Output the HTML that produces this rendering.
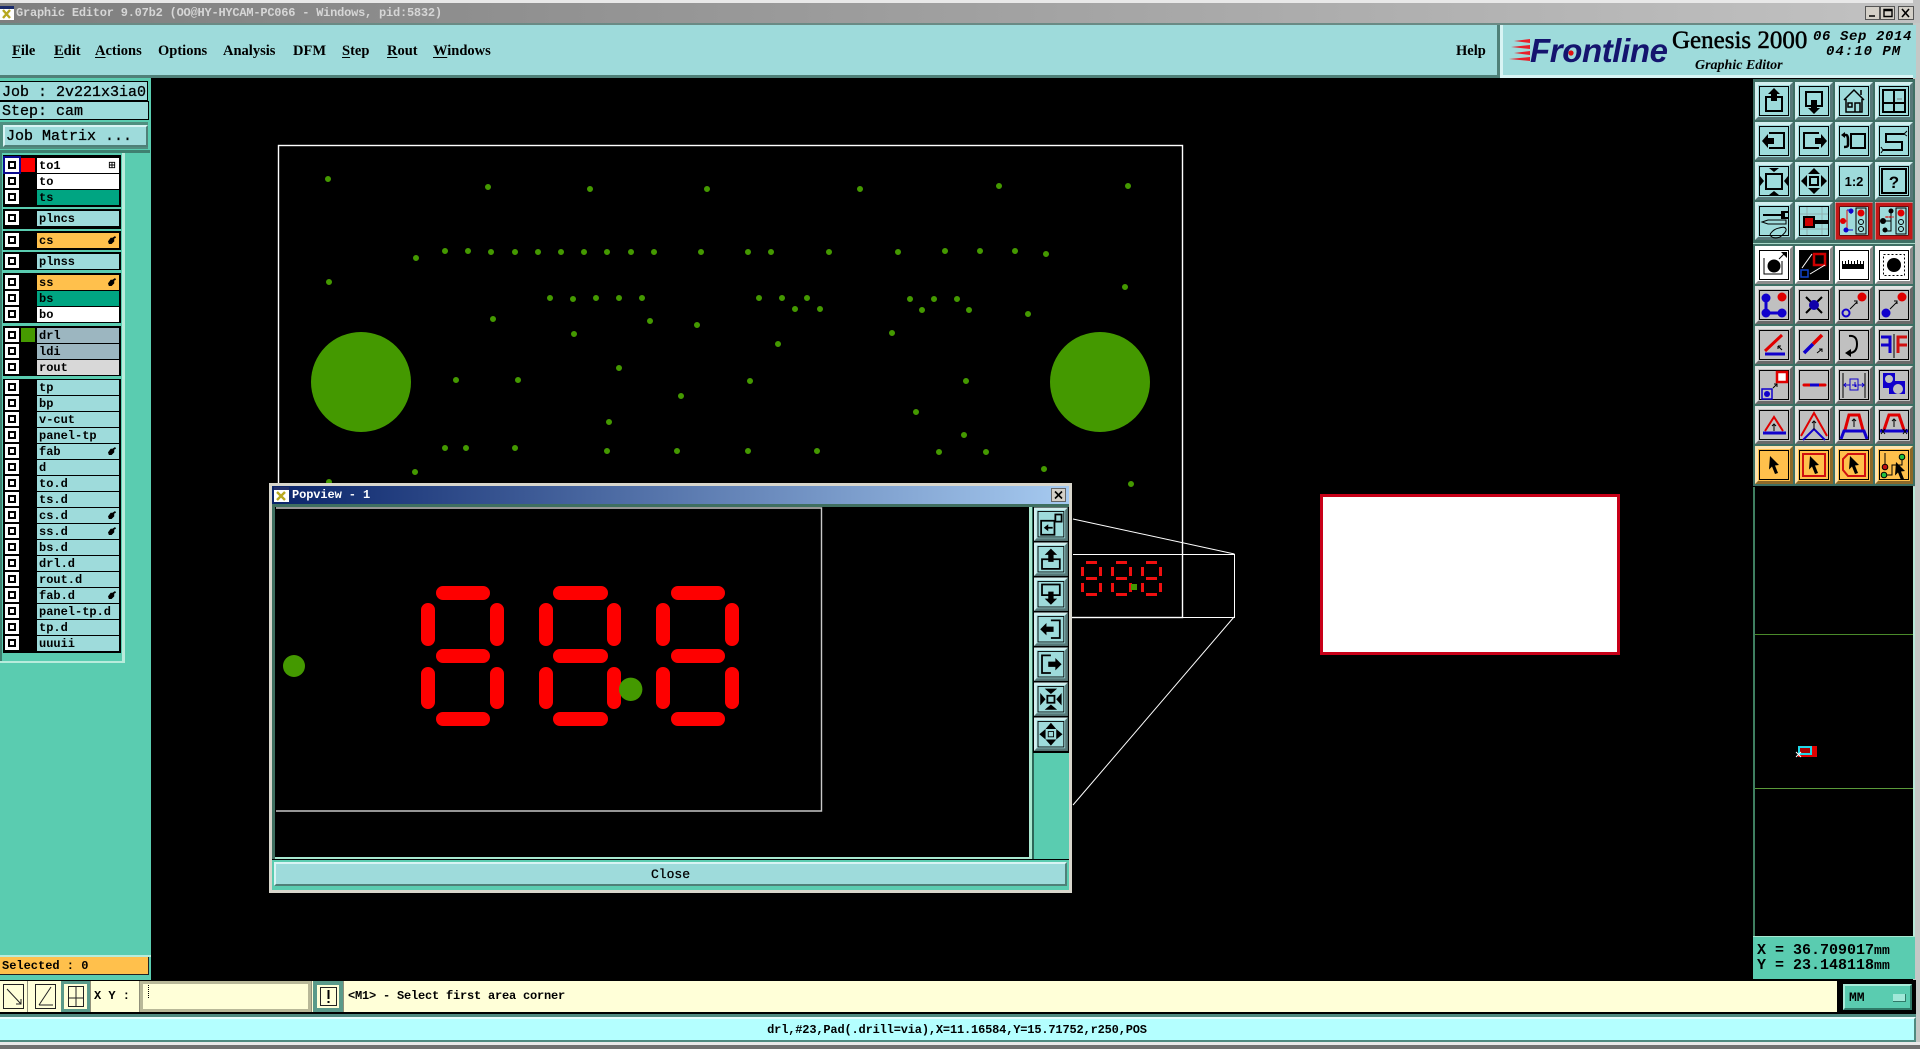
<!DOCTYPE html>
<html><head><meta charset="utf-8"><title>Graphic Editor</title>
<style>
html,body{margin:0;padding:0;background:#000;width:1920px;height:1049px;overflow:hidden}
body{position:relative;font-family:"Liberation Mono",monospace;font-weight:bold;font-size:12px;color:#000}
.a,.t,.r{position:absolute}
.t{white-space:pre;line-height:1}
.m{font-family:"Liberation Serif",serif;font-size:14.5px;top:44px;text-decoration:none}
.m u{text-underline-offset:2px}
.g{position:absolute;left:3px;width:118px;background:#000}
.r{left:5px;width:114px;height:15px}
.c{position:absolute;left:0;top:0;width:14px;height:14px;background:#fff}
.c:after{content:"";position:absolute;left:3px;top:3px;width:4px;height:4px;border:2px solid #000;background:#fff}
.l{position:absolute;left:32px;top:0;width:82px;height:15px;line-height:17px;padding-left:2px;box-sizing:border-box;background:#9edbdb;color:#000;white-space:pre}
.w{background:#fff}.e{background:#00a582}.o{background:#ffc04c}.s{background:#9cb6c0}.y{background:#d8d8d8}
.h{position:absolute;right:3px;top:3px;width:8px;height:8px}
svg{position:absolute;left:0;top:0;overflow:visible}
use.q{fill:#9edbdb}use.wh{fill:#fff}use.n{fill:#c0c0c0}use.or{fill:#ffc04c}
</style></head><body>

<!-- title -->
<div class="a" style="left:0;top:0;width:1920px;height:3px;background:#e8e8e8"></div>
<div class="a" style="left:0;top:3px;width:1920px;height:20px;background:linear-gradient(90deg,#7e7e7e,#c2c2c2)"></div>
<div class="a" style="left:0;top:23px;width:1920px;height:2px;background:#6a8a84"></div>
<div class="t" style="left:16px;top:7px;color:#d6d6d6;font-size:12px;letter-spacing:-.22px">Graphic Editor 9.07b2 (OO@HY-HYCAM-PC066 - Windows, pid:5832)</div>
<svg width="1920" height="30" style="z-index:5">
<rect x="0" y="6" width="14" height="14" fill="#fff"/><rect x="0" y="6" width="14" height="3" fill="#1a2a6a"/>
<path d="M3 10l7 8M10 10l-7 8" stroke="#b8a820" stroke-width="2.4"/>
<g fill="#d4d0c8" stroke="#555"><rect x="1865.5" y="6.5" width="14" height="13"/><rect x="1880.5" y="6.5" width="14" height="13"/><rect x="1898.5" y="6.5" width="15" height="13"/></g>
<path d="M1869 16h6M1884 9.5h8v7h-8zM1884 10.5h8" stroke="#000" stroke-width="1.4" fill="none"/>
<path d="M1902 9l7 8M1909 9l-7 8" stroke="#000" stroke-width="1.6"/>
</svg>

<!-- menu -->
<div class="a" style="left:0;top:25px;width:1500px;height:50px;background:#9edbdb;border-bottom:3px solid #4f8078"></div>
<div class="a" style="left:1497px;top:25px;width:3px;height:53px;background:#4f8078"></div>
<div class="a" style="left:1500px;top:25px;width:3px;height:53px;background:#d8f4f4"></div>
<div class="a" style="left:1503px;top:25px;width:412px;height:50px;background:#9edbdb;border-bottom:3px solid #d8f4f4"></div>
<div class="a" style="left:1913px;top:0;width:7px;height:1049px;background:#c4c8c6"></div>
<div class="a" style="left:1913px;top:0;width:7px;height:23px;background:#c2c2c2"></div>
<div class="a" style="left:1913px;top:25px;width:3px;height:53px;background:#9edbdb"></div>
<div class="t m" style="left:12px"><u>F</u>ile</div>
<div class="t m" style="left:54px"><u>E</u>dit</div>
<div class="t m" style="left:95px"><u>A</u>ctions</div>
<div class="t m" style="left:158px">Options</div>
<div class="t m" style="left:223px">Analysis</div>
<div class="t m" style="left:293px">DFM</div>
<div class="t m" style="left:342px"><u>S</u>tep</div>
<div class="t m" style="left:387px"><u>R</u>out</div>
<div class="t m" style="left:433px"><u>W</u>indows</div>
<div class="t m" style="left:1456px">Help</div>
<div class="t" style="left:1530px;top:32px;font:italic bold 33px 'Liberation Sans',sans-serif;color:#14146e;letter-spacing:-.4px">Frontline</div>
<svg width="1920" height="80" style="z-index:3">
<path fill="#e8202a" d="M1514 41l16-2v4zM1511 47l19-2v4zM1514 53l16-2v4zM1509 59l21-2v4z"/>
<circle cx="1571" cy="53" r="2.6" fill="#e01010"/>
</svg>
<div class="t" style="left:1672px;top:27px;font:normal 25px 'Liberation Serif',serif;-webkit-text-stroke:.5px #000">Genesis 2000</div>
<div class="t" style="left:1695px;top:58px;font:italic bold 14px 'Liberation Serif',serif">Graphic Editor</div>
<div class="t" style="left:1813px;top:29px;font:italic bold 14px 'Liberation Mono',monospace;letter-spacing:.6px">06 Sep 2014</div>
<div class="t" style="left:1826px;top:44px;font:italic bold 14px 'Liberation Mono',monospace;letter-spacing:1px">04:10 PM</div>

<!-- left panel -->
<div class="a" style="left:0;top:78px;width:151px;height:902px;background:#5accb0"></div>
<div class="a" style="left:0;top:81px;width:147px;height:18px;background:#9edbdb;border:1px solid #000;border-left:0"></div>
<div class="a" style="left:0;top:101px;width:148px;height:17px;background:#9edbdb;border:1px solid #000;border-left:0"></div>
<div class="a" style="left:0;top:122px;width:148px;height:27px;background:#4f8f80"></div>
<div class="a" style="left:3px;top:125px;width:141px;height:18px;background:#9edbdb;border-top:2px solid #d8f4f4;border-left:2px solid #d8f4f4;border-bottom:2px solid #4f8078;border-right:2px solid #4f8078"></div>
<div class="t" style="left:2px;top:85px;font-size:15px;font-weight:normal;-webkit-text-stroke:.3px #000">Job : 2v221x3ia0</div>
<div class="t" style="left:2px;top:104px;font-size:15px;font-weight:normal;-webkit-text-stroke:.3px #000">Step: cam</div>
<div class="t" style="left:6px;top:129px;font-size:15px;font-weight:normal;-webkit-text-stroke:.3px #000">Job Matrix ...</div>
<div class="a" style="left:0;top:150px;width:150px;height:3px;background:#3f8070"></div>
<div class="a" style="left:122px;top:153px;width:3px;height:510px;background:#b8ecdc"></div>
<div class="a" style="left:0;top:661px;width:125px;height:2px;background:#b8ecdc"></div>
<div class="a" style="left:0;top:153px;width:2px;height:508px;background:#3f8070"></div>

<div class="g" style="top:155px;height:52px"></div>
<div class="g" style="top:209px;height:20px"></div>
<div class="g" style="top:231px;height:19px"></div>
<div class="g" style="top:252px;height:18px"></div>
<div class="g" style="top:273px;height:50px"></div>
<div class="g" style="top:326px;height:50px"></div>
<div class="g" style="top:379px;height:274px"></div>

<div class="a" style="left:5px;top:158px;width:14px;height:14px;outline:2px solid #0a0a90"></div>
<div class="a" style="left:21px;top:158px;width:14px;height:14px;background:#fe0000"></div>
<div class="a" style="left:21px;top:328px;width:14px;height:14px;background:#469a00"></div>

<div class="r" style="top:158px"><i class="c"></i><span class="l w">to1<svg class="h" viewBox="0 0 9 9" style="left:auto"><path d="M1.5 1.5h6v6h-6zM4.5 1.5v6M1.5 4.5h6" fill="none" stroke="#000"/></svg></span></div>
<div class="r" style="top:174px"><i class="c"></i><span class="l w">to</span></div>
<div class="r" style="top:190px"><i class="c"></i><span class="l e">ts</span></div>
<div class="r" style="top:211px"><i class="c"></i><span class="l">plncs</span></div>
<div class="r" style="top:233px"><i class="c"></i><span class="l o">cs<svg class="h" viewBox="0 0 9 9" style="left:auto"><path d="M0 6l3-4h2l3-2 1 2-2 1v3L4 9H1z"/></svg></span></div>
<div class="r" style="top:254px"><i class="c"></i><span class="l">plnss</span></div>
<div class="r" style="top:275px"><i class="c"></i><span class="l o">ss<svg class="h" viewBox="0 0 9 9" style="left:auto"><path d="M0 6l3-4h2l3-2 1 2-2 1v3L4 9H1z"/></svg></span></div>
<div class="r" style="top:291px"><i class="c"></i><span class="l e">bs</span></div>
<div class="r" style="top:307px"><i class="c"></i><span class="l w">bo</span></div>
<div class="r" style="top:328px"><i class="c"></i><span class="l s">drl</span></div>
<div class="r" style="top:344px"><i class="c"></i><span class="l s">ldi</span></div>
<div class="r" style="top:360px"><i class="c"></i><span class="l y">rout</span></div>
<div class="r" style="top:380px"><i class="c"></i><span class="l">tp</span></div>
<div class="r" style="top:396px"><i class="c"></i><span class="l">bp</span></div>
<div class="r" style="top:412px"><i class="c"></i><span class="l">v-cut</span></div>
<div class="r" style="top:428px"><i class="c"></i><span class="l">panel-tp</span></div>
<div class="r" style="top:444px"><i class="c"></i><span class="l">fab<svg class="h" viewBox="0 0 9 9" style="left:auto"><path d="M0 6l3-4h2l3-2 1 2-2 1v3L4 9H1z"/></svg></span></div>
<div class="r" style="top:460px"><i class="c"></i><span class="l">d</span></div>
<div class="r" style="top:476px"><i class="c"></i><span class="l">to.d</span></div>
<div class="r" style="top:492px"><i class="c"></i><span class="l">ts.d</span></div>
<div class="r" style="top:508px"><i class="c"></i><span class="l">cs.d<svg class="h" viewBox="0 0 9 9" style="left:auto"><path d="M0 6l3-4h2l3-2 1 2-2 1v3L4 9H1z"/></svg></span></div>
<div class="r" style="top:524px"><i class="c"></i><span class="l">ss.d<svg class="h" viewBox="0 0 9 9" style="left:auto"><path d="M0 6l3-4h2l3-2 1 2-2 1v3L4 9H1z"/></svg></span></div>
<div class="r" style="top:540px"><i class="c"></i><span class="l">bs.d</span></div>
<div class="r" style="top:556px"><i class="c"></i><span class="l">drl.d</span></div>
<div class="r" style="top:572px"><i class="c"></i><span class="l">rout.d</span></div>
<div class="r" style="top:588px"><i class="c"></i><span class="l">fab.d<svg class="h" viewBox="0 0 9 9" style="left:auto"><path d="M0 6l3-4h2l3-2 1 2-2 1v3L4 9H1z"/></svg></span></div>
<div class="r" style="top:604px"><i class="c"></i><span class="l">panel-tp.d</span></div>
<div class="r" style="top:620px"><i class="c"></i><span class="l">tp.d</span></div>
<div class="r" style="top:636px"><i class="c"></i><span class="l">uuuii</span></div>

<div class="a" style="left:0;top:955px;width:151px;height:2px;background:#b8ecdc"></div>
<div class="a" style="left:0;top:957px;width:149px;height:18px;background:#ffc04c;line-height:18px;padding-left:2px;box-sizing:border-box;border-bottom:1px solid #222;border-right:1px solid #222">Selected : 0</div>

<!-- main canvas -->
<svg width="1920" height="1049">
<rect x="278.5" y="145.5" width="904" height="472" fill="none" stroke="#fff" stroke-width="1.4"/>
<circle cx="361" cy="382" r="50" fill="#449900"/><circle cx="1100" cy="382" r="50" fill="#449900"/>
<path fill="none" stroke="#449900" stroke-width="6" stroke-linecap="round" d="M328 179h.01M488 187h.01M590 189h.01M707 189h.01M860 189h.01M999 186h.01M1128 186h.01M445 251h.01M468 251h.01M491 252h.01M515 252h.01M538 252h.01M561 252h.01M584 252h.01M607 252h.01M631 252h.01M654 252h.01M701 252h.01M748 252h.01M771 252h.01M829 252h.01M898 252h.01M945 251h.01M980 251h.01M1015 251h.01M1046 254h.01M416 258h.01M329 282h.01M1125 287h.01M550 298h.01M573 299h.01M596 298h.01M619 298h.01M642 298h.01M759 298h.01M782 298h.01M807 298h.01M910 299h.01M934 299h.01M957 299h.01M795 309h.01M820 309h.01M922 310h.01M969 310h.01M1028 314h.01M493 319h.01M650 321h.01M697 325h.01M574 334h.01M892 333h.01M778 344h.01M619 368h.01M456 380h.01M518 380h.01M750 381h.01M966 381h.01M681 396h.01M916 412h.01M609 422h.01M964 435h.01M445 448h.01M466 448h.01M515 448h.01M607 451h.01M677 451h.01M748 451h.01M817 451h.01M939 452h.01M986 452h.01M415 472h.01M1044 469h.01M1131 484h.01M329 482h.01"/>
<path fill="none" stroke="#fff" d="M1073 519L1234.5 554M1073 554.5H1234.5V617.5H1073M1234 617L1073 805"/>
<path fill="none" stroke="#f01010" stroke-width="3" d="M1086 562.500h11M1082.500 567v9M1100.500 567v9M1086 578.500h11M1082.500 583v9M1100.500 583v9M1086 594.500h11M1116 562.500h11M1112.500 567v9M1130.500 567v9M1116 578.500h11M1112.500 583v9M1130.500 583v9M1116 594.500h11M1146 562.500h11M1142.500 567v9M1160.500 567v9M1146 578.500h11M1142.500 583v9M1160.500 583v9M1146 594.500h11"/>
<rect x="1131" y="584" width="6" height="6" fill="#449900"/>
<rect x="1320" y="494" width="300" height="161" fill="#fff"/>
<rect x="1321.500" y="495.500" width="297" height="158" fill="none" stroke="#c80018" stroke-width="3"/>
</svg>

<!-- popup -->
<div class="a" style="left:269px;top:483px;width:803px;height:410px;background:#5accb0;box-shadow:inset 0 0 0 3px #d8d6cc;z-index:10">
  <div class="a" style="left:3px;top:3px;width:797px;height:18px;background:linear-gradient(90deg,#0a246a,#a6caf0)"></div>
  <div class="a" style="left:3px;top:21px;width:797px;height:3px;background:#3f6f60"></div>
  <div class="a" style="left:3px;top:21px;width:3px;height:355px;background:#3f6f60"></div>
  <div class="a" style="left:6px;top:24px;width:754px;height:350px;background:#000;border-right:3px solid #a8e8d0;border-bottom:2px solid #a8e8d0"></div>
  <div class="t" style="left:23px;top:6px;color:#fff;font-size:12px;letter-spacing:-.1px">Popview - 1</div>
  <div class="a" style="left:764px;top:24px;width:1px;height:352px;background:#000"></div>
  <div class="a" style="left:3px;top:376px;width:797px;height:1px;background:#000"></div>
  <div class="a" style="left:5px;top:379px;width:793px;height:24px;background:#9edbdb;border-top:2px solid #d8f4f4;border-left:2px solid #d8f4f4;border-bottom:2px solid #4f8078;border-right:2px solid #4f8078;box-sizing:border-box;text-align:center;line-height:21px;font-weight:normal;font-size:13px;-webkit-text-stroke:.3px #000">Close</div>
</div>
<svg width="1920" height="1049" style="z-index:11">
<defs>
<g id="bv"><rect width="38" height="38"/><path fill="#fff" fill-opacity=".55" d="M0 0H38L35 3H3V35L0 38Z"/><path fill="#000" fill-opacity=".45" d="M38 38H0L3 35H35V3L38 0Z"/><rect x="4.500" y="4.500" width="29" height="29" fill="none" stroke="#000"/></g>
</defs>
<rect x="274" y="487" width="15" height="15" fill="#fff"/><rect x="274" y="487" width="15" height="3" fill="#24306a"/>
<path d="M277 492l8 8M285 492l-8 8" stroke="#b8a820" stroke-width="2.400"/>
<rect x="1051.500" y="488.500" width="14" height="13" fill="#d4d0c8" stroke="#666"/>
<path d="M1055 491.500l7 7M1062 491.500l-7 7" stroke="#000" stroke-width="1.600"/>
<path fill="none" stroke="#c8c8c8" stroke-width="1.400" d="M276 508H821.500V811H276"/>
<circle cx="294" cy="666" r="11" fill="#449900"/>
<path fill="none" stroke="#fe0000" stroke-width="14" stroke-linecap="round" d="M443 593h40M428 610v29M497 610v29M443 656h40M428 674v28M497 674v28M443 719h40M560 593h41M546 610v29M614 610v29M560 656h41M546 674v28M614 674v28M560 719h41M678 593h40M663 610v29M732 610v29M678 656h40M663 674v28M732 674v28M678 719h40"/>
<circle cx="630.700" cy="689.300" r="11.700" fill="#449900"/>
<rect x="1033" y="507" width="36" height="352" fill="#5accb0"/>
<rect x="1033" y="507" width="36" height="246" fill="#000"/>
<path d="M1033 507v352" stroke="#000"/>
<g>
<g transform="translate(1034,507.500) scale(.89,.88)"><use class="q" href="#bv"/><path fill="none" stroke="#000" stroke-width="2" d="M8 15h15v16H8zM24 8h7v8h-7z"/><path d="M11 23l5-4v3h5v2h-5v3z"/></g>
<g transform="translate(1034,542.500) scale(.89,.88)"><use class="q" href="#bv"/><path fill="none" stroke="#000" stroke-width="2" d="M9 19H29V30H9z"/><path d="M19 7l7 7h-4v8h-6v-8h-4z"/></g>
<g transform="translate(1034,577.500) scale(.89,.88)"><use class="q" href="#bv"/><path fill="none" stroke="#000" stroke-width="2" d="M9 8H29V20H9z"/><path d="M19 31l7-7h-4v-8h-6v8h-4z"/></g>
<g transform="translate(1034,612.500) scale(.89,.88)"><use class="q" href="#bv"/><path fill="none" stroke="#000" stroke-width="2" d="M19 9H29V29H19"/><path d="M7 19l7-7v4h8v6h-8v4z"/></g>
<g transform="translate(1034,647.500) scale(.89,.88)"><use class="q" href="#bv"/><path fill="none" stroke="#000" stroke-width="2" d="M19 9H9V29H19"/><path d="M31 19l-7-7v4h-8v6h8v4z"/></g>
<g transform="translate(1034,682.500) scale(.89,.88)"><use class="q" href="#bv"/><path fill="none" stroke="#000" stroke-width="2" d="M15 15h8v8h-8z"/><path d="M19 13l-7-6h14zM19 25l-7 6h14zM13 19l-6-7v14zM25 19l6-7v14z"/></g>
<g transform="translate(1034,717.500) scale(.89,.88)"><use class="q" href="#bv"/><path fill="none" stroke="#000" d="M16 16h6v6h-6z"/><path d="M19 6l6 7H13zM19 32l6-7H13zM6 19l7-6v12zM32 19l-7-6v12z"/></g>
</g>
</svg>

<!-- right toolbar -->
<div class="a" style="left:1753px;top:79px;width:162px;height:407px;background:#3e6f64"></div>
<div class="a" style="left:1753px;top:243px;width:162px;height:1px;background:#a8d8c8"></div>
<div class="a" style="left:1753px;top:487px;width:162px;height:449px;background:#000;border-left:2px solid #3f7f60;box-sizing:border-box;border-right:2px solid #b8e8d8"></div>
<div class="a" style="left:1755px;top:634px;width:158px;height:1px;background:#4a8a2a"></div>
<div class="a" style="left:1755px;top:788px;width:158px;height:1px;background:#5a9a3a"></div>
<svg width="1920" height="1049" style="z-index:2">
<rect x="1798" y="746" width="19" height="11" fill="#e00000"/><rect x="1799" y="747" width="12" height="7" fill="#a00" stroke="#20d8e8" stroke-width="2"/>
<path d="M1796 752l5 5M1796 757l5-5" stroke="#fff"/>

<g transform="translate(1755,82)"><use class="q" href="#bv"/><path fill="none" stroke="#000" stroke-width="2" d="M11 15H27V29H11z"/><path d="M19 6l6 6h-3v7h-6v-7h-3z"/></g>
<g transform="translate(1795,82)"><use class="q" href="#bv"/><path fill="none" stroke="#000" stroke-width="2" d="M11 10H27V24H11z"/><path d="M19 32l6-6h-3v-8h-6v8h-3z"/></g>
<g transform="translate(1835,82)"><use class="q" href="#bv"/><path fill="none" stroke="#000" stroke-width="1.500" d="M9 18L19 8l10 10M11 17V30H27V17M20 30V21h5v9M13 21h4v4h-4zM26 13V8"/></g>
<g transform="translate(1875,82)"><use class="q" href="#bv"/><path fill="none" stroke="#000" stroke-width="2" d="M8 8h22v22H8zM8 21h22M19 8v22"/><path stroke="#777" d="M22 17h5"/></g>
<g transform="translate(1755,122)"><use class="q" href="#bv"/><path fill="none" stroke="#000" stroke-width="2" d="M14 11H29V26H14"/><path d="M7 19l6-7v4h6v6h-6v4z"/></g>
<g transform="translate(1795,122)"><use class="q" href="#bv"/><path fill="none" stroke="#000" stroke-width="2" d="M24 11H9V26H24"/><path d="M32 19l-6-7v4h-6v6h6v4z"/></g>
<g transform="translate(1835,122)"><use class="q" href="#bv"/><path fill="none" stroke="#000" stroke-width="2" d="M16 12H30V26H16z"/><path fill="none" stroke="#000" stroke-width="2.500" d="M8 13h3q2 0 2 5v5q0 2-4 2"/><path d="M6 13l4-3v6z"/></g>
<g transform="translate(1875,122)"><use class="q" href="#bv"/><path fill="none" stroke="#000" stroke-width="2" d="M29 12H11V20H27V28H8"/><path fill="none" stroke="#000" d="M29 12l3-3M29 12l3 2M8 28l-2-3M8 28l-2 3"/></g>
<g transform="translate(1755,162)"><use class="q" href="#bv"/><path fill="none" stroke="#000" stroke-width="2" d="M11 12H27V27H11z"/><path d="M19 10l-5-4h10zM19 29l-5 4h10zM9 19l-4-5v10zM29 19l4-5v10z"/></g>
<g transform="translate(1795,162)"><use class="q" href="#bv"/><path fill="none" stroke="#000" stroke-width="2" d="M15 15H23V23H15z"/><path d="M19 6l6 6H13zM19 32l6-6H13zM6 19l6-6v12zM32 19l-6-6v12z"/></g>
<g transform="translate(1835,162)"><use class="q" href="#bv"/><text x="19" y="24" text-anchor="middle" fill="#000" style="font:bold 13px 'Liberation Sans',sans-serif">1:2</text></g>
<g transform="translate(1875,162)"><use class="q" href="#bv"/><rect x="7" y="7" width="24" height="24" fill="none" stroke="#000" stroke-width="2"/><text x="19" y="26" text-anchor="middle" fill="#000" style="font:bold 17px 'Liberation Sans',sans-serif">?</text></g>
<g transform="translate(1755,202)"><use class="q" href="#bv"/><path fill="none" stroke="#000" stroke-width="2" d="M8 13H28"/><path d="M26 9h7v2h-3v4h3v2h-7z"/><path fill="none" stroke="#000" d="M7 20l6-2H31V22H13zM24 26q6-2 7 1t-6 8q-5 2-8 0t-1-4q3-4 8-5z"/></g>
<g transform="translate(1795,202)"><use class="q" href="#bv"/><path stroke="#8fb0b0" d="M5 12h28M5 27h28M12 5v28M27 5v28"/><path d="M14 18H34v4H14z"/><rect x="9" y="15" width="10" height="10" fill="#c00" stroke="#000" stroke-width="2"/></g>
<g transform="translate(1835,202)"><use class="q" href="#bv"/><rect x="2.500" y="2.500" width="33" height="33" fill="none" stroke="#c41818" stroke-width="4"/><path fill="none" stroke="#e01010" d="M7 19H12M12 8v22"/><path fill="none" stroke="#10c" d="M12 8h4v4M12 28h6"/><circle cx="8" cy="19" r="3" fill="#e00000"/><circle cx="16" cy="9" r="2.500" fill="#10c"/><circle cx="11" cy="28" r="2.500" fill="#10c"/><circle cx="26" cy="11" r="3.500" fill="#e00000"/><g fill="none" stroke="#000"><circle cx="26" cy="20" r="2.500"/><circle cx="26" cy="27" r="2.500"/><rect x="21" y="6" width="10" height="26"/></g></g>
<g transform="translate(1875,202)"><use class="q" href="#bv"/><rect x="2.500" y="2.500" width="33" height="33" fill="none" stroke="#c41818" stroke-width="4"/><path fill="none" stroke="#000" d="M9 19h7M16 9v20H10"/><circle cx="8" cy="19" r="3"/><circle cx="16" cy="9" r="2.500"/><circle cx="10" cy="28" r="2.500"/><path stroke="#d03030" fill="none" d="M10 15h9M12 14v2M15 14v2"/><circle cx="26" cy="11" r="3.500" fill="#e00000"/><g fill="none" stroke="#000"><circle cx="26" cy="20" r="2.500"/><circle cx="26" cy="27" r="2.500"/><rect x="21" y="6" width="10" height="26"/></g></g>

<g transform="translate(1755,246)"><use class="wh" href="#bv"/><circle cx="19" cy="20" r="6.500"/><path fill="none" stroke="#000" d="M9 12V28H27V15M24 13l6-6"/><path d="M32 6v6l-6-6z"/></g>
<g transform="translate(1795,246)"><use class="wh" href="#bv"/><rect x="5" y="5" width="28" height="28"/><rect x="19" y="8" width="11" height="11" fill="none" stroke="#c00" stroke-width="2.500"/><rect x="6" y="24" width="7" height="7" fill="none" stroke="#14c" stroke-width="1.500"/><path stroke="#fff" d="M17 8L7 22M30 19L15 28"/></g>
<g transform="translate(1835,246)"><use class="wh" href="#bv"/><path d="M7 15h1v3h2v-3h1v3h2v-4h1v4h2v-3h1v3h2v-3h1v3h2v-4h1v4h2v-3h1v3h2v-3h1V23H7z"/></g>
<g transform="translate(1875,246)"><use class="wh" href="#bv"/><rect x="8.500" y="8.500" width="21" height="21" fill="none" stroke="#000" stroke-dasharray="2 2"/><circle cx="19" cy="19" r="7"/></g>

<g transform="translate(1755,286)"><use class="n" href="#bv"/><path fill="none" stroke="#10c" stroke-width="3" d="M11 12V27H27"/><circle cx="11" cy="12" r="4.500" fill="#10c"/><circle cx="11" cy="27" r="4.500" fill="#10c"/><circle cx="27" cy="27" r="4.500" fill="#10c"/><circle cx="27" cy="11" r="4.500" fill="#e00000"/></g>
<g transform="translate(1795,286)"><use class="n" href="#bv"/><path stroke="#000" stroke-width="2" d="M11 11l16 16M27 11L11 27"/><circle cx="19" cy="19" r="5" fill="#10a"/></g>
<g transform="translate(1835,286)"><use class="n" href="#bv"/><circle cx="11" cy="27" r="3.500" fill="none" stroke="#10c" stroke-width="2"/><circle cx="27" cy="11" r="4.500" fill="#e00000"/><path fill="none" stroke="#000" d="M15 23l7-7M19 15h3v3"/></g>
<g transform="translate(1875,286)"><use class="n" href="#bv"/><circle cx="11" cy="27" r="4.500" fill="#10c"/><circle cx="27" cy="11" r="4.500" fill="#e00000"/><path fill="none" stroke="#000" d="M15 23l7-7M19 15h3v3"/></g>
<g transform="translate(1755,326)"><use class="n" href="#bv"/><path stroke="#e00000" stroke-width="3" d="M10 25L27 9"/><path stroke="#10c" stroke-width="3" d="M10 28H30"/><path fill="none" stroke="#000" d="M23 20l4 4M23 20h3M23 20v3"/></g>
<g transform="translate(1795,326)"><use class="n" href="#bv"/><path stroke-width="3.500" stroke="#e00000" d="M18 18L27 9"/><path stroke-width="3.500" stroke="#10c" d="M18 18L9 27"/><path fill="none" stroke="#000" d="M22 27l5-4M24 23h3v3"/></g>
<g transform="translate(1835,326)"><use class="n" href="#bv"/><path fill="none" stroke="#000" stroke-width="2" d="M14 10q8-1 8 8t-8 9"/><path d="M10 27l6-4v8z"/></g>
<g transform="translate(1875,326)"><use class="n" href="#bv"/><path stroke="#000" d="M19 8v24"/><path fill="none" stroke="#10c" stroke-width="3" d="M6 11H15V27M6 19H15"/><path fill="none" stroke="#d01010" stroke-width="3" d="M32 11H23V27M32 19H23"/></g>
<g transform="translate(1755,366)"><use class="n" href="#bv"/><rect x="22" y="6" width="10" height="10" fill="#fff" stroke="#e00000" stroke-width="2.500"/><rect x="7" y="23" width="10" height="10" fill="none" stroke="#10c" stroke-width="1.500"/><circle cx="12" cy="28" r="3" fill="#10c"/><path fill="none" stroke="#000" d="M18 22l4-4M19 18h3v3"/></g>
<g transform="translate(1795,366)"><use class="n" href="#bv"/><path stroke="#e00000" stroke-width="3" stroke-linecap="round" d="M9 19H30"/><path stroke="#10c" stroke-width="3" d="M15 19H24"/></g>
<g transform="translate(1835,366)"><use class="n" href="#bv"/><path stroke="#000" d="M8 7v25M30 7v25"/><rect x="15" y="13" width="8" height="11" fill="none" stroke="#10c"/><path fill="none" stroke="#10c" d="M9 19h6M23 19h6M17 19h4v2M20 16v5M11 17l-2 2 2 2M27 17l2 2-2 2"/></g>
<g transform="translate(1875,366)"><use class="n" href="#bv"/><path fill="#10c" d="M8 7H20V15H30V28H14V22H8z"/><circle cx="14" cy="13" r="4" fill="#c0c0c0"/><circle cx="23" cy="23" r="5" fill="#c0c0c0"/></g>
<g transform="translate(1755,406)"><use class="n" href="#bv"/><path fill="none" stroke="#e00000" stroke-width="2" d="M10 25L19 11 28 25"/><path stroke="#10c" stroke-width="3" d="M8 27H31"/><path fill="none" stroke="#000" d="M19 25v-7M17 20l2-2 2 2"/></g>
<g transform="translate(1795,406)"><use class="n" href="#bv"/><path fill="none" stroke="#e00000" stroke-width="2" d="M6 30L19 7 32 30"/><path fill="none" stroke="#10c" stroke-width="2" d="M8 34l11-11 11 11"/><path fill="none" stroke="#000" d="M19 24v-9M17 17l2-2 2 2"/></g>
<g transform="translate(1835,406)"><use class="n" href="#bv"/><path fill="none" stroke="#e00000" stroke-width="3" d="M10 24L14 9H24L28 24"/><path fill="none" stroke="#10c" stroke-width="3" d="M6 33L9 25H29L32 33"/><path fill="none" stroke="#000" d="M19 21v-8M17 15l2-2 2 2"/></g>
<g transform="translate(1875,406)"><use class="n" href="#bv"/><path fill="none" stroke="#e00000" stroke-width="3" d="M9 24L14 9H24L29 24"/><path stroke="#10c" stroke-width="3" d="M5 25H33"/><path fill="none" stroke="#000" d="M19 21v-8M17 15l2-2 2 2M6 23l4 5M10 23l-4 5M28 23l4 5M32 23l-4 5"/></g>

<g transform="translate(1755,446)"><use class="or" href="#bv"/><path d="M15 10l9 9-4 .5 3 7.500-3 1-3-7.500-3 3z"/></g>
<g transform="translate(1795,446)"><use class="or" href="#bv"/><rect x="8" y="8" width="22" height="22" fill="none" stroke="#d01010" stroke-width="2"/><path d="M15 10l9 9-4 .5 3 7.500-3 1-3-7.500-3 3z"/></g>
<g transform="translate(1835,446)"><use class="or" href="#bv"/><path fill="none" stroke="#d01010" stroke-width="2" d="M13 8H30V30H13L8 24V13z"/><path d="M15 10l9 9-4 .5 3 7.500-3 1-3-7.500-3 3z"/></g>
<g transform="translate(1875,446)"><use class="or" href="#bv"/><path fill="none" stroke="#000" d="M10 7V21M11 29H17V19H27V11"/><circle cx="10" cy="21" r="2.800" fill="#c01010" stroke="#000"/><circle cx="9" cy="29" r="2.800" fill="#20c040" stroke="#000"/><circle cx="27" cy="11" r="2.800" fill="#20c040" stroke="#000"/><path d="M21 16l9 9-4 .5 3 7.500-3 1-3-7.500-3 3z"/></g>
</svg>
<div class="a" style="left:1753px;top:936px;width:162px;height:42px;background:#5accb0;border-top:1px solid #a8e8d0"></div>
<div class="t" style="left:1757px;top:943px;font-size:15px;font-weight:bold">X = 36.709017<span style="font-size:13px;letter-spacing:.2px">mm</span></div>
<div class="t" style="left:1757px;top:958px;font-size:15px;font-weight:bold">Y = 23.148118<span style="font-size:13px;letter-spacing:.2px">mm</span></div>

<!-- bottom -->
<div class="a" style="left:0;top:981px;width:1837px;height:31px;background:#ffffd8"></div>
<div class="a" style="left:0;top:1012px;width:1916px;height:2px;background:#000"></div>
<div class="a" style="left:0;top:1014px;width:1916px;height:3px;background:#4f8a80"></div>
<div class="a" style="left:1837px;top:980px;width:79px;height:32px;background:#000"></div>
<div class="a" style="left:1843px;top:984px;width:69px;height:26px;background:#5accb0;border-top:2px solid #a8ecd8;border-left:2px solid #a8ecd8;border-bottom:2px solid #2f7a68;border-right:2px solid #2f7a68;box-sizing:border-box"></div>
<div class="t" style="left:1849px;top:991px;font-size:13px">MM</div>
<div class="a" style="left:1893px;top:994px;width:12px;height:7px;background:#a0e8d8;border-bottom:1px solid #2f7a68;border-right:1px solid #2f7a68"></div>
<div class="t" style="left:94px;top:990px;font-size:12px">X Y :</div>
<div class="a" style="left:140px;top:981px;width:171px;height:31px;background:#ffffd8;border:3px solid #b8b898;box-sizing:border-box"></div>
<div class="t" style="left:348px;top:990px;font-size:12px;letter-spacing:-.2px">&lt;M1&gt; - Select first area corner</div>
<svg width="1920" height="1049" style="z-index:2">
<path stroke="#000" stroke-width="1" stroke-dasharray="1 1" d="M148.500 985v14"/>
<rect x="61" y="981" width="29" height="31" fill="#5a9a8a"/><rect x="64" y="984" width="23" height="25" fill="#ffffd8"/>
<rect x="313" y="981" width="30" height="31" fill="#5a9a8a"/><rect x="317" y="985" width="22" height="23" fill="#ffffd8"/>
<path d="M311.500 981v31M343.500 981v31M139.500 981v31M90.500 981v31M27.500 981v31" stroke="#90907a"/>
<g fill="none" stroke="#222"><rect x="3.500" y="984.500" width="20" height="24"/><rect x="35.500" y="984.500" width="20" height="24"/><rect x="68.500" y="986.500" width="15" height="20"/><rect x="320.500" y="987.500" width="16" height="18"/><path d="M76 987v19M68 998h15M7 989l14 15M21 999v5h-5M39 1005l12-18M39 1005h14"/></g>
<path d="M328.500 990v9M328.500 1001v2" stroke="#000" stroke-width="2"/>
</svg>
<div class="a" style="left:0;top:1017px;width:1916px;height:25px;background:#b4ffff;border-top:2px solid #e8ffff;border-bottom:2px solid #4f8a80;box-sizing:border-box;border-right:2px solid #4f8a80;text-align:center;line-height:22px;font-size:12px;font-weight:bold"><span style="position:relative;left:0;letter-spacing:-.17px">drl,#23,Pad(.drill=via),X=11.16584,Y=15.71752,r250,POS</span></div>
<div class="a" style="left:0;top:1042px;width:1920px;height:3px;background:#e8e8e8"></div>
<div class="a" style="left:0;top:1045px;width:1920px;height:4px;background:#707070"></div>
</body></html>
